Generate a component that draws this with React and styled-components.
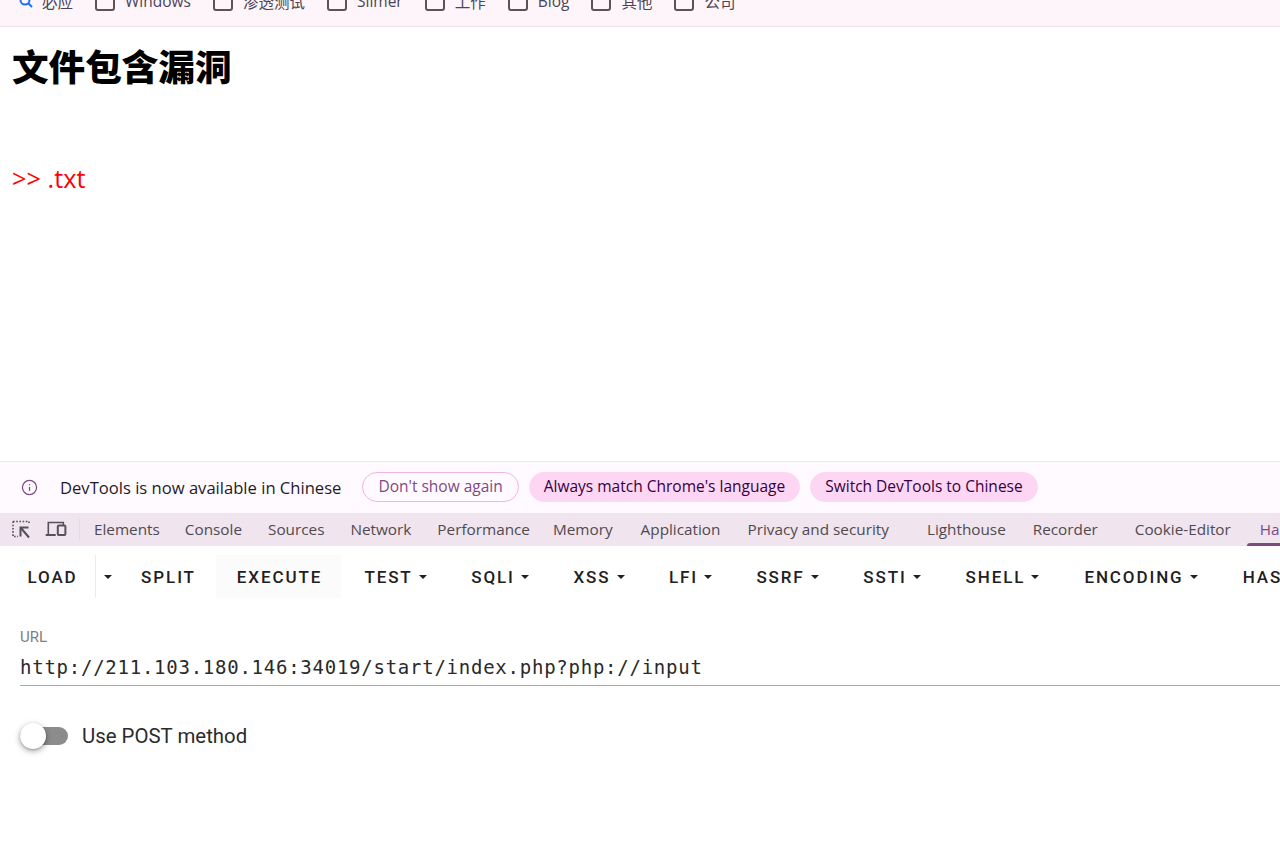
import React from 'react'
import styled, { createGlobalStyle } from 'styled-components'
import { Info } from 'lucide-react'

const GlobalStyle = createGlobalStyle`
  html, body {
    margin: 0;
    padding: 0;
    height: 100%;
    overflow: hidden;
    background: #fff;
  }
`

const Page = styled.div`
  display: flex;
  flex-direction: column;
  height: 851px;
  overflow: hidden;
`

const BookmarksBar = styled.div`
  flex: none;
  display: flex;
  align-items: flex-end;
  gap: 22px;
  height: 26px;
  padding: 0 0 15px 18px;
  box-sizing: content-box;
  margin-top: -15px;
  background: #fef5fa;
  border-bottom: 1px solid #eee2e9;
  font-family: 'Open Sans', 'Noto Sans CJK SC', sans-serif;
  font-size: 15.5px;
  color: #4a4458;
`

const Bookmark = styled.div`
  display: flex;
  align-items: center;
  gap: ${p => (p.$search ? 8 : 10)}px;
  height: 20px;
  white-space: nowrap;
`

const FolderBox = styled.span`
  display: block;
  width: 20px;
  height: 19px;
  box-sizing: border-box;
  border: 2px solid #5a5458;
  border-radius: 3px;
`

const Content = styled.main`
  flex: none;
  height: 434px;
  padding: 0 12px;
  box-sizing: border-box;
`

const Heading = styled.h1`
  margin: 17px 0 0;
  font-size: 36.6px;
  line-height: 44px;
  font-weight: 900;
  font-family: 'Noto Sans CJK SC', sans-serif;
  color: #000;
`

const Result = styled.p`
  margin: 76px 0 0;
  font-family: 'Open Sans', sans-serif;
  font-size: 25.3px;
  line-height: 28px;
  color: #f00;
`

const InfoBanner = styled.div`
  flex: none;
  display: flex;
  align-items: center;
  height: 51px;
  padding: 0 0 0 21px;
  background: #fffaff;
  border-top: 1px solid #f5e0ee;
  font-family: 'Open Sans', sans-serif;
  font-size: 16.6px;
  color: #1f1a1f;
`

const InfoText = styled.span`
  margin: 0 21px 0 22px;
  white-space: nowrap;
`

const PillButton = styled.button`
  height: 30px;
  margin-right: 10px;
  margin-top: -2px;
  padding: 0 ${p => (p.$outline ? 15 : 14)}px 1px;
  box-sizing: border-box;
  border-radius: 15px;
  border: 1px solid ${p => (p.$outline ? '#f2b3e4' : '#fdd6f4')};
  background: ${p => (p.$outline ? 'transparent' : '#fdd6f4')};
  color: ${p => (p.$outline ? '#7d4a83' : '#35003f')};
  font-family: 'Open Sans', sans-serif;
  font-size: 15.5px;
  white-space: nowrap;
`

const TabBar = styled.div`
  flex: none;
  display: flex;
  align-items: center;
  height: 33px;
  padding-left: 11px;
  background: #f0e4ee;
  font-family: 'Open Sans', sans-serif;
  font-size: 15.3px;
  color: #4f4a50;
  overflow: hidden;
`

const ToolIcons = styled.div`
  display: flex;
  align-items: center;
  gap: 14px;
  height: 21px;
  padding-right: 12px;
  border-right: 1px solid #f7cdea;
`

const Tab = styled.div`
  position: relative;
  flex: none;
  display: flex;
  align-items: center;
  height: 33px;
  padding-bottom: 2px;
  box-sizing: border-box;
  margin-left: ${p => p.$gap}px;
  white-space: nowrap;
  color: ${p => (p.$active ? '#7d4a83' : 'inherit')};

  ${p =>
    p.$active &&
    `
    padding-left: 13px;
    &::after {
      content: '';
      position: absolute;
      left: 0;
      right: 0;
      bottom: 0;
      height: 3px;
      border-radius: 3px 3px 0 0;
      background: #7d4a83;
    }
  `}
`

const HackBar = styled.section`
  flex: 1;
  background: #fff;
  font-family: 'Roboto', sans-serif;
  color: #212121;
  overflow: hidden;
`

const Menu = styled.nav`
  display: flex;
  align-items: center;
  height: 43px;
  padding-top: 9px;
  white-space: nowrap;
`

const MenuButton = styled.div`
  flex: none;
  display: flex;
  align-items: center;
  justify-content: center;
  gap: 6px;
  height: 43px;
  width: ${p => p.$width}px;
  box-sizing: border-box;
  background: ${p => (p.$hover ? '#fbfbfb' : 'transparent')};
  font-size: 17px;
  font-weight: 500;
  letter-spacing: 1.9px;
  border-right: ${p => (p.$divided ? '1px solid #ececec' : 'none')};
  padding-left: ${p => p.$inset || 0}px;
  margin-right: ${p => p.$after || 0}px;
`

const Caret = styled.span`
  display: block;
  width: 0;
  height: 0;
  border-left: 4.7px solid transparent;
  border-right: 4.7px solid transparent;
  border-top: 4.7px solid #212121;
`

const Form = styled.div`
  padding: 31px 0 0 20px;
`

const FieldLabel = styled.label`
  display: block;
  font-size: 15px;
  line-height: 16px;
  color: #808080;
`

const UrlField = styled.div`
  height: 41px;
  padding-top: 9px;
  box-sizing: border-box;
  border-bottom: 1px solid #a8a8a8;
  font-family: 'DejaVu Sans Mono', monospace;
  font-size: 19px;
  line-height: 26px;
  letter-spacing: 0.75px;
  color: #2a2a2a;
  white-space: nowrap;
`

const SwitchRow = styled.div`
  display: flex;
  align-items: center;
  gap: 14px;
  margin-top: 36px;
  height: 28px;
`

const SwitchTrack = styled.span`
  position: relative;
  display: block;
  width: 48px;
  height: 18px;
  border-radius: 9px;
  background: #8c8c8c;

  &::after {
    content: '';
    position: absolute;
    left: 0;
    top: -4px;
    width: 26px;
    height: 26px;
    border-radius: 50%;
    background: #fff;
    box-shadow: 0 2px 6px rgba(0, 0, 0, 0.35), 0 1px 2px rgba(0, 0, 0, 0.2);
  }
`

const SwitchLabel = styled.span`
  font-size: 20.4px;
  color: #2b2b2b;
`

const SearchIcon = () => (
  <svg width="16" height="16" viewBox="0 0 16 16" fill="none" stroke="#1a73e8" strokeWidth="2">
    <circle cx="7" cy="7" r="4.5" />
    <path d="M10.5 10.5L14 14" />
  </svg>
)

const InspectIcon = () => (
  <svg width="20" height="20" viewBox="0 0 20 20" fill="none" stroke="#55505a" strokeWidth="1.6">
    <path d="M2 1.5h16v3M2 1.5v15h5" strokeDasharray="1.6 1.6" />
    <path d="M9.5 16.5V7.5h8M9.5 7.5L18 17.5" strokeWidth="2" />
  </svg>
)

const DeviceIcon = () => (
  <svg width="22" height="18" viewBox="0 0 22 18" fill="none" stroke="#55505a" strokeWidth="1.6">
    <path d="M3.3 13.5V1.5h15v2.5" />
    <path d="M0.7 14h10" strokeWidth="2" />
    <rect x="12.8" y="4.5" width="7.6" height="9.5" rx="1" strokeWidth="2" />
  </svg>
)

const bookmarks = [
  { name: '必应', search: true },
  { name: 'Windows' },
  { name: '渗透测试' },
  { name: 'Slimer' },
  { name: '工作' },
  { name: 'Blog' },
  { name: '其他' },
  { name: '公司' },
]

const tabs = [
  ['Elements', 14],
  ['Console', 25],
  ['Sources', 26],
  ['Network', 26],
  ['Performance', 26],
  ['Memory', 23],
  ['Application', 28],
  ['Privacy and security', 27],
  ['Lighthouse', 38],
  ['Recorder', 27],
  ['Cookie-Editor', 37],
]

const menu = [
  { label: 'LOAD', width: 96, divided: true, inset: 10 },
  { label: '', width: 23, caret: true },
  { label: 'SPLIT', width: 97, inset: 2 },
  { label: 'EXECUTE', width: 125, hover: true, after: 1, inset: 2 },
  { label: 'TEST', width: 107, caret: true },
  { label: 'SQLI', width: 102, caret: true },
  { label: 'XSS', width: 96, caret: true },
  { label: 'LFI', width: 87, caret: true },
  { label: 'SSRF', width: 107, caret: true },
  { label: 'SSTI', width: 102, caret: true },
  { label: 'SHELL', width: 119, caret: true },
  { label: 'ENCODING', width: 158, caret: true },
  { label: 'HASHING', width: 147, caret: true },
]

export default function App() {
  return (
    <Page>
      <GlobalStyle />
      <BookmarksBar>
        {bookmarks.map(b => (
          <Bookmark key={b.name} $search={b.search}>
            {b.search ? <SearchIcon /> : <FolderBox />}
            {b.name}
          </Bookmark>
        ))}
      </BookmarksBar>
      <Content>
        <Heading>文件包含漏洞</Heading>
        <Result>&gt;&gt; .txt</Result>
      </Content>
      <InfoBanner>
        <Info size={17} color="#7d4a83" strokeWidth={1.8} />
        <InfoText>DevTools is now available in Chinese</InfoText>
        <PillButton $outline>Don't show again</PillButton>
        <PillButton>Always match Chrome's language</PillButton>
        <PillButton>Switch DevTools to Chinese</PillButton>
      </InfoBanner>
      <TabBar>
        <ToolIcons>
          <InspectIcon />
          <DeviceIcon />
        </ToolIcons>
        {tabs.map(([name, gap]) => (
          <Tab key={name} $gap={gap}>
            {name}
          </Tab>
        ))}
        <Tab $gap={16} $active>
          HackBar
        </Tab>
      </TabBar>
      <HackBar>
        <Menu>
          {menu.map((m, i) => (
            <MenuButton
              key={i}
              $width={m.width}
              $hover={m.hover}
              $divided={m.divided}
              $inset={m.inset}
              $after={m.after}
            >
              {m.label}
              {m.caret && <Caret />}
            </MenuButton>
          ))}
        </Menu>
        <Form>
          <FieldLabel>URL</FieldLabel>
          <UrlField>http://211.103.180.146:34019/start/index.php?php://input</UrlField>
          <SwitchRow>
            <SwitchTrack />
            <SwitchLabel>Use POST method</SwitchLabel>
          </SwitchRow>
        </Form>
      </HackBar>
    </Page>
  )
}
